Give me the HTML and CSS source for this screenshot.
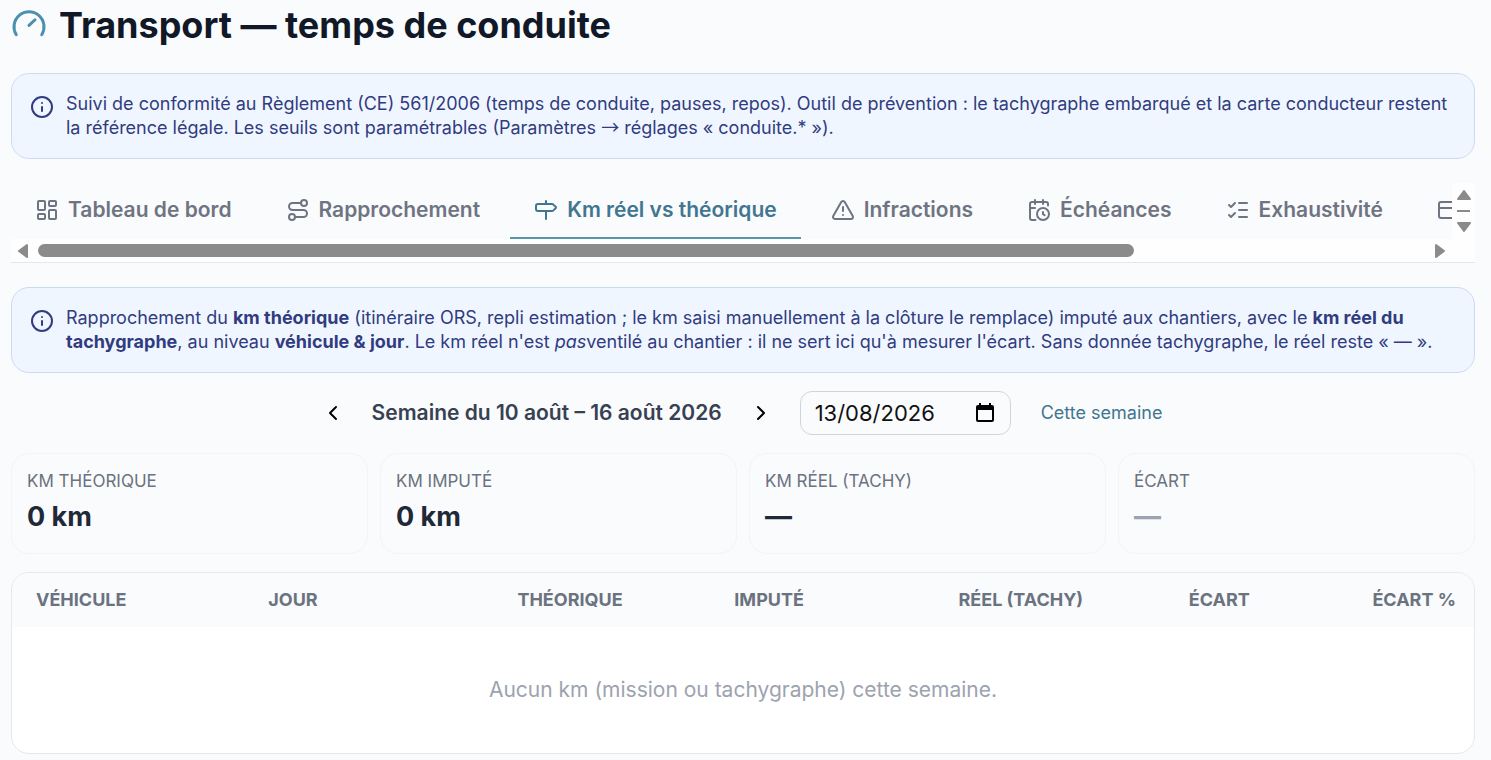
FILE: index.html
```html
<!DOCTYPE html>
<html lang="fr">
<head>
    <meta charset="UTF-8">
    <meta name="viewport" content="width=device-width, initial-scale=1.0">
    <title>Transport — temps de conduite</title>
    <link rel="stylesheet" href="styles.css">
</head>
<body>
    <main class="page">
        <header class="page-title">
            <svg class="icon title-icon" viewBox="0 0 24 24"><path d="M16 8.500 12 12.300"/><path d="M3.500 18.500a10 10 0 1 1 17 0"/></svg>
            <h1>Transport — temps de conduite</h1>
        </header>

        <div class="notice">
            <svg class="icon notice-icon" viewBox="0 0 24 24"><circle cx="12" cy="12" r="10"/><path d="M12 16v-4"/><path d="M12 8h.01"/></svg>
            <p>Suivi de conformité au Règlement (CE) 561/2006 (temps de conduite, pauses, repos). Outil de prévention : le tachygraphe embarqué et la carte conducteur restent la référence légale. Les seuils sont paramétrables (Paramètres <span class="arrow-char">→</span> réglages « conduite.* »).</p>
        </div>

        <div class="tabs">
            <div class="tabs-main">
                <nav class="tab-list">
                    <button class="tab">
                        <svg class="icon" viewBox="0 0 24 24"><rect x="3" y="3" width="7" height="9" rx="1"/><rect x="14" y="3" width="7" height="5" rx="1"/><rect x="14" y="12" width="7" height="9" rx="1"/><rect x="3" y="16" width="7" height="5" rx="1"/></svg>
                        Tableau de bord
                    </button>
                    <button class="tab">
                        <svg class="icon" viewBox="0 0 24 24"><circle cx="6" cy="19" r="3"/><path d="M9 19h8.500a3.500 3.500 0 0 0 0-7h-11a3.500 3.500 0 0 1 0-7H15"/><circle cx="18" cy="5" r="3"/></svg>
                        Rapprochement
                    </button>
                    <button class="tab active">
                        <svg class="icon" viewBox="0 0 24 24"><path d="M12 13v8"/><path d="M12 3v3"/><path d="M18 6a2 2 0 0 1 1.400.6l2.300 2.200a1 1 0 0 1 0 1.400l-2.300 2.200A2 2 0 0 1 18 13H4a2 2 0 0 1-2-2V8a2 2 0 0 1 2-2z"/></svg>
                        Km réel vs théorique
                    </button>
                    <button class="tab">
                        <svg class="icon" viewBox="0 0 24 24"><path d="m21.730 18-8-14a2 2 0 0 0-3.480 0l-8 14A2 2 0 0 0 4 21h16a2 2 0 0 0 1.730-3"/><path d="M12 9v4"/><path d="M12 17h.01"/></svg>
                        Infractions
                    </button>
                    <button class="tab">
                        <svg class="icon" viewBox="0 0 24 24"><path d="M16 14v2.200l1.600 1"/><path d="M16 2v4"/><path d="M21 7.500V6a2 2 0 0 0-2-2H5a2 2 0 0 0-2 2v14a2 2 0 0 0 2 2h3.500"/><path d="M3 10h5"/><path d="M8 2v4"/><circle cx="16" cy="16" r="6"/></svg>
                        Échéances
                    </button>
                    <button class="tab">
                        <svg class="icon" viewBox="0 0 24 24"><path d="M13 5h8"/><path d="M13 12h8"/><path d="M13 19h8"/><path d="m3 17 2 2 4-4"/><path d="m3 7 2 2 4-4"/></svg>
                        Exhaustivité
                    </button>
                    <button class="tab" aria-label="Cartes">
                        <svg class="icon" viewBox="0 0 24 24"><rect x="2" y="4" width="20" height="16" rx="2"/><path d="M2 10h20"/></svg>
                    </button>
                </nav>
                <div class="scroll-x">
                    <svg class="arrow" viewBox="0 0 12 16"><path d="M10 2v12L2 8z"/></svg>
                    <div class="scroll-track"><div class="scroll-thumb"></div></div>
                    <svg class="arrow" viewBox="0 0 12 16"><path d="M2 2v12l8-6z"/></svg>
                </div>
            </div>
            <div class="scroll-y">
                <svg class="arrow-y" viewBox="0 0 16 12"><path d="M2 10h12L8 2z"/></svg>
                <div class="scroll-line"></div>
                <svg class="arrow-y" viewBox="0 0 16 12"><path d="M2 2h12l-6 8z"/></svg>
            </div>
        </div>

        <div class="notice">
            <svg class="icon notice-icon" viewBox="0 0 24 24"><circle cx="12" cy="12" r="10"/><path d="M12 16v-4"/><path d="M12 8h.01"/></svg>
            <p>Rapprochement du <strong>km théorique</strong> (itinéraire ORS, repli estimation ; le km saisi manuellement à la clôture le remplace) imputé aux chantiers, avec le <strong>km réel du tachygraphe</strong>, au niveau <strong>véhicule &amp; jour</strong>. Le km réel n'est <em>pas</em>ventilé au chantier : il ne sert ici qu'à mesurer l'écart. Sans donnée tachygraphe, le réel reste « — ».</p>
        </div>

        <div class="week">
            <button class="week-arrow" aria-label="Semaine précédente"><svg class="icon" viewBox="0 0 24 24"><path d="m15 18-6-6 6-6"/></svg></button>
            <span class="week-label">Semaine du 10 août – 16 août 2026</span>
            <button class="week-arrow" aria-label="Semaine suivante"><svg class="icon" viewBox="0 0 24 24"><path d="m9 18 6-6-6-6"/></svg></button>
            <div class="date-field">
                <input type="text" value="13/08/2026" aria-label="Date">
                <button aria-label="Ouvrir le calendrier"><svg viewBox="0 0 18 20"><path fill-rule="evenodd" d="M3 0h2v2h8V0h2v2h1a2 2 0 0 1 2 2v13a2 2 0 0 1-2 2H2a2 2 0 0 1-2-2V4a2 2 0 0 1 2-2h1zM2 7v10h14V7z"/></svg></button>
            </div>
            <button class="week-today">Cette semaine</button>
        </div>

        <section class="cards">
            <div class="card">
                <h2>KM THÉORIQUE</h2>
                <p>0 km</p>
            </div>
            <div class="card">
                <h2>KM IMPUTÉ</h2>
                <p>0 km</p>
            </div>
            <div class="card">
                <h2>KM RÉEL (TACHY)</h2>
                <p>—</p>
            </div>
            <div class="card">
                <h2>ÉCART</h2>
                <p class="muted">—</p>
            </div>
        </section>

        <div class="table-box">
            <table>
                <thead>
                    <tr>
                        <th class="col-vehicle">VÉHICULE</th>
                        <th class="col-day">JOUR</th>
                        <th class="col-theo num">THÉORIQUE</th>
                        <th class="col-imp num">IMPUTÉ</th>
                        <th class="col-real num">RÉEL (TACHY)</th>
                        <th class="col-gap num">ÉCART</th>
                        <th class="num">ÉCART %</th>
                    </tr>
                </thead>
                <tbody>
                    <tr>
                        <td class="empty" colspan="7">Aucun km (mission ou tachygraphe) cette semaine.</td>
                    </tr>
                </tbody>
            </table>
        </div>
    </main>
</body>
</html>
```
FILE: styles.css
```css
* {
    box-sizing: border-box;
}

body {
    margin: 0;
    background-color: #fafbfd;
    color: #111827;
    font-family: Inter, "Liberation Sans", sans-serif;
    font-size: 18px;
    line-height: 24px;
}

h1, h2, p {
    margin: 0;
}

button {
    padding: 0;
    border: none;
    background: none;
    font: inherit;
    cursor: pointer;
}

.page {
    padding: 3px 16px 6px 11px;
}

.icon {
    width: 24px;
    height: 24px;
    flex-shrink: 0;
    fill: none;
    stroke: currentColor;
    stroke-width: 2;
    stroke-linecap: round;
    stroke-linejoin: round;
}

.page-title {
    display: flex;
    align-items: center;
    gap: 12px;
    margin-bottom: 26px;
}

.page-title h1 {
    font-size: 36px;
    line-height: 44px;
    font-weight: 700;
}

.title-icon {
    width: 36px;
    height: 36px;
    color: #4a90b0;
}

.notice {
    display: flex;
    gap: 12px;
    padding: 18px;
    min-height: 86px;
    border: 1px solid #cbdaf3;
    border-radius: 18px;
    background-color: #f0f6ff;
    color: #313c80;
}

.notice-icon {
    margin-top: 3px;
}

.arrow-char {
    font-family: "Noto Sans CJK JP", sans-serif;
    line-height: 1;
}

.tabs {
    display: flex;
    margin: 24px 0;
    border-bottom: 1px solid #e3e8e9;
}

.tabs-main {
    flex: 1;
    min-width: 0;
}

.tab-list {
    display: flex;
    gap: 6px;
    overflow: hidden;
}

.tab {
    display: flex;
    align-items: center;
    gap: 9px;
    flex-shrink: 0;
    padding: 14px 24px;
    border-bottom: 2px solid transparent;
    color: #6f7482;
    font-size: 21px;
    line-height: 26px;
    font-weight: 600;
}

.tab.active {
    color: #417690;
    border-color: #5b93a9;
}

.scroll-x {
    display: flex;
    align-items: center;
    gap: 9px;
    height: 23px;
    padding: 0 6px;
    background-color: #fefefe;
}

.scroll-track {
    flex: 1;
}

.scroll-thumb {
    width: 79%;
    height: 13px;
    border-radius: 7px;
    background-color: #8b8b8b;
}

.arrow, .arrow-y {
    fill: #8b8b8b;
    stroke: #8b8b8b;
    stroke-width: 2;
    stroke-linejoin: round;
}

.arrow {
    width: 12px;
    height: 16px;
}

.arrow-y {
    width: 16px;
    height: 12px;
}

.scroll-y {
    display: flex;
    flex-direction: column;
    align-items: center;
    gap: 9px;
    width: 23px;
    padding-top: 6px;
    background-color: #fefefe;
}

.scroll-line {
    width: 13px;
    height: 2px;
    background-color: #8b8b8b;
}

.week {
    display: flex;
    justify-content: center;
    align-items: center;
    gap: 18px;
    margin: 18px 0;
}

.week-arrow {
    display: flex;
    padding: 9px;
}

.week-label {
    color: #374151;
    font-size: 21px;
    font-weight: 600;
}

.date-field {
    display: flex;
    align-items: center;
    justify-content: space-between;
    width: 211px;
    height: 44px;
    padding: 0 16px 0 14px;
    border: 1px solid #d1d5db;
    border-radius: 12px;
}

.date-field input {
    width: 140px;
    padding: 0;
    border: none;
    outline: none;
    background: none;
    color: #111;
    font: inherit;
    font-size: 22px;
}

.date-field button {
    display: flex;
}

.date-field svg {
    width: 18px;
    height: 20px;
}

.week-today {
    padding: 9px 12px;
    color: #417690;
}

.cards {
    display: grid;
    grid-template-columns: repeat(4, 1fr);
    gap: 12px;
    margin-bottom: 18px;
}

.card {
    padding: 15px 15px 18px;
    border: 1px solid #f3f4f6;
    border-radius: 18px;
}

.card h2 {
    color: #6b7280;
    font-size: 17px;
    font-weight: 400;
}

.card p {
    margin-top: 6px;
    color: #1f2937;
    font-size: 27px;
    line-height: 36px;
    font-weight: 700;
}

.card .muted {
    color: #9ca3af;
}

.table-box {
    border: 1px solid #e5e9eb;
    border-radius: 18px;
    background-color: #fff;
    overflow: hidden;
}

table {
    width: 100%;
    border-collapse: collapse;
    table-layout: fixed;
}

th {
    padding: 15px 18px;
    background-color: #fafbfc;
    color: #6b7280;
    font-size: 18px;
    font-weight: 700;
    text-align: left;
    white-space: nowrap;
}

th:first-child {
    padding-left: 24px;
}

.num {
    text-align: right;
}

.col-vehicle {
    width: 16.3%;
}

.col-day {
    width: 10.1%;
}

.col-theo {
    width: 16.6%;
}

.col-imp {
    width: 12.4%;
}

.col-real {
    width: 19.1%;
}

.col-gap {
    width: 11.4%;
}

.empty {
    padding: 51px 24px;
    color: #9ca3af;
    font-size: 21px;
    text-align: center;
}
```
